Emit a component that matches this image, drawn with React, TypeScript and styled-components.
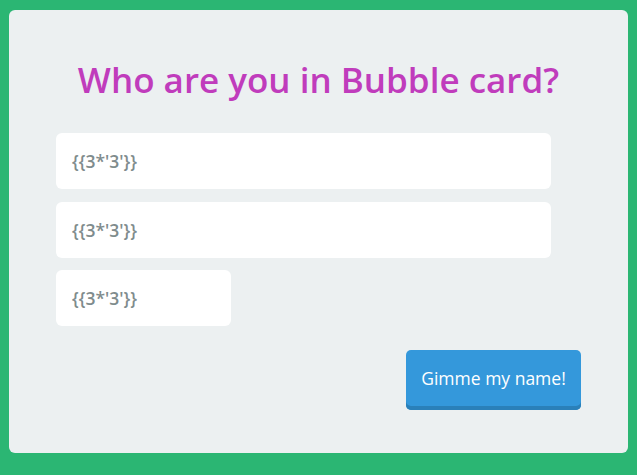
import React from "react";
import styled, { createGlobalStyle } from "styled-components";

const Global = createGlobalStyle`
  html, body { margin: 0; padding: 0; background: #2bb673; }
  body { font-family: "Open Sans", "Noto Sans", sans-serif; }
`;

const Page = styled.div`
  width: 637px;
  height: 475px;
  box-sizing: border-box;
  padding: 10px 9px 22px 9px;
  background: #2bb673;
`;

const Card = styled.div`
  height: 100%;
  box-sizing: border-box;
  background: #ecf0f1;
  border-radius: 6px;
  padding: 46px 47px 0 47px;
  display: flex;
  flex-direction: column;
`;

const Title = styled.h1`
  margin: 0 0 29px 0;
  text-align: center;
  font-size: 35px;
  font-weight: 600;
  line-height: 48px;
  color: #c03cbc;
`;

const Field = styled.div<{ $w: number }>`
  width: ${(p) => p.$w}px;
  height: 56px;
  box-sizing: border-box;
  background: #ffffff;
  border-radius: 6px;
  padding: 0 16px;
  display: flex;
  align-items: center;
  margin-bottom: 12.5px;
  font-size: 17.5px;
  font-weight: 600;
  color: #7f8c8d;
`;

const Actions = styled.div`
  display: flex;
  justify-content: flex-end;
  margin-top: 11px;
`;

const Button = styled.button`
  width: 175px;
  height: 60px;
  border: none;
  border-radius: 5px;
  background: #3498db;
  box-shadow: inset 0 -4px 0 #2a80b9;
  color: #ffffff;
  font-family: "Open Sans", "Noto Sans", sans-serif;
  font-size: 17.5px;
  padding: 0 0 3px 0;
  cursor: pointer;
`;

export default function App() {
  return (
    <>
      <Global />
      <Page>
        <Card>
          <Title>Who are you in Bubble card?</Title>
          <Field $w={495}>{"{{3*'3'}}"}</Field>
          <Field $w={495}>{"{{3*'3'}}"}</Field>
          <Field $w={175}>{"{{3*'3'}}"}</Field>
          <Actions>
            <Button>Gimme my name!</Button>
          </Actions>
        </Card>
      </Page>
    </>
  );
}
